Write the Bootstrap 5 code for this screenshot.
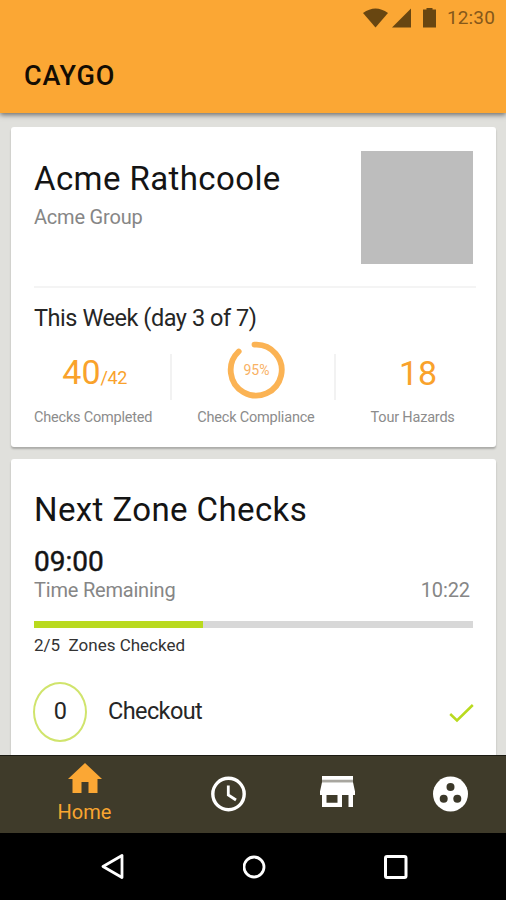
<!DOCTYPE html>
<html lang="en">
<head>
<meta charset="utf-8">
<meta name="viewport" content="width=device-width, initial-scale=1">
<title>CAYGO</title>
<link href="https://cdn.jsdelivr.net/npm/bootstrap@5.3.0/dist/css/bootstrap.min.css" rel="stylesheet">
<script src="https://cdn.jsdelivr.net/npm/bootstrap@5.3.0/dist/js/bootstrap.bundle.min.js" defer></script>
<style>
body{font-family:Roboto,"Liberation Sans",sans-serif;color:#262626;background:#e0e0dc}
svg{display:block;flex:none}
.app{height:900px;max-width:506px}
.topbar{height:113px;background:#fba734;box-shadow:0 2px 5px rgba(0,0,0,.5);z-index:2}
.status{height:35px;padding-right:11px;color:#684611}
.ico-batt{margin:0 11px 0 12px}
.clock{font-size:19px;line-height:20px;color:#85581a;letter-spacing:.15px}
.brand{font-size:27px;line-height:32px;font-weight:500;color:#140d03;padding:25px 0 0 24px;letter-spacing:.8px}
.feed{padding:14px 10px 0 11px;gap:12px}
.panel{border:0;border-radius:3px;box-shadow:0 2px 2px rgba(0,0,0,.24);flex:none;padding:0 23px;height:320px}
.ttl{font-size:33px;line-height:40px;color:#141414;white-space:nowrap;letter-spacing:.4px;margin-top:32px}
.panel-zone .ttl{margin-top:31px}
.sub{font-size:20px;line-height:24px;color:#868686;letter-spacing:-.2px}
.group{margin-top:6px}
.photo{width:112px;height:113px;background:#bdbdbd;margin-top:24px}
.rule{height:2px;background:#f4f4f4;margin:22px -3px 0 0}
.week{font-size:23.500px;line-height:28px;margin-top:16px;letter-spacing:-.45px}
.stats{margin-top:9px;height:88px}
.stat{color:#f9a22b}
.fig{height:62px;font-size:34px;line-height:40px}
.fig small{font-size:18px;letter-spacing:-.4px}
.fig-checks{padding:6px 0 0 3px}
.fig-hazards{padding:2px 0 0 11px}
.lbl{font-size:14.500px;line-height:18px;color:#8c8c8c;margin-top:6px;white-space:nowrap;letter-spacing:-.2px}
.sep{width:2px;height:46px;background:#f2f2f2;margin-top:13px}
.sep-a{margin-left:18px;margin-right:25px}
.sep-b{margin-left:19px;margin-right:35px}
.hour{font-size:28px;line-height:32px;-webkit-text-stroke:.45px #141414;color:#141414;margin-top:16px}
.left-time{margin-right:3px;letter-spacing:-.1px}
.bar{height:7px;border-radius:0;background:#d8d8d8;margin-top:19px}
.bar .progress-bar{background:#b9da1e}
.done{font-size:17px;line-height:20px;margin-top:7px;color:#333}
.count{width:54px;height:60px;border:2px solid #d0e46c;border-radius:50%;margin:0 21px 0 -1px}
.zone{margin-top:27px;font-size:23.500px;letter-spacing:-.6px}
.tick{margin-right:-1px;margin-top:1px}
.tabs{height:78px;background:#3f3b2a;border-top:1px solid #1b1a12;z-index:2;flex:none}
.tab-home{width:169px;padding-top:7px;gap:7px}
.tab-rest{padding:0 38px 2px 42px}
.sys{height:67px;background:#000;z-index:2;flex:none;padding:0 98px 0 101px}
.home{font-size:20px;line-height:24px;color:#f9a630}
</style>
</head>
<body>
<div class="app d-flex flex-column overflow-hidden">
  <header class="topbar position-relative flex-shrink-0">
    <div class="status d-flex justify-content-end align-items-center">
      <svg width="25" height="20" viewBox="0 0 25 20" fill="currentColor"><path d="M0 5Q12.500-4 25 5L12.500 19.500Z"/></svg>
      <svg class="ms-1" width="19" height="20" viewBox="0 0 19 20" fill="currentColor"><path d="M0 19.500H19V.5Z"/></svg>
      <svg class="ico-batt" width="13" height="20" viewBox="0 0 13 20" fill="currentColor"><path d="M0 1.500H3.500V0H9.500V1.500H13V19.500H0Z"/></svg>
      <span class="clock">12:30</span>
    </div>
    <div class="brand">CAYGO</div>
  </header>

  <main class="feed d-flex flex-column flex-grow-1 overflow-hidden">
    <section class="card panel">
      <div class="d-flex justify-content-between">
        <div>
          <div class="ttl">Acme Rathcoole</div>
          <div class="sub group">Acme Group</div>
        </div>
        <div class="photo"></div>
      </div>
      <div class="rule"></div>
      <div class="week">This Week (day 3 of 7)</div>
      <div class="stats d-flex">
        <div class="stat text-center">
          <div class="fig fig-checks d-flex justify-content-center align-items-center"><span>40<small>/42</small></span></div>
          <div class="lbl">Checks Completed</div>
        </div>
        <div class="sep sep-a"></div>
        <div class="stat text-center">
          <div class="fig d-flex justify-content-center">
            <svg width="58" height="58" viewBox="0 0 58 58"><path d="M27.500 3.600A25.500 25.500 0 1 1 11.700 10.500" fill="none" stroke="#fbb354" stroke-width="5.800" stroke-linecap="round"/><text x="29.500" y="33.500" text-anchor="middle" font-size="14" fill="#f9b163">95%</text></svg>
          </div>
          <div class="lbl">Check Compliance</div>
        </div>
        <div class="sep sep-b"></div>
        <div class="stat text-center">
          <div class="fig fig-hazards d-flex justify-content-center align-items-center">18</div>
          <div class="lbl">Tour Hazards</div>
        </div>
      </div>
    </section>

    <section class="card panel panel-zone">
      <div class="ttl">Next Zone Checks</div>
      <div class="hour">09:00</div>
      <div class="d-flex justify-content-between sub">
        <span>Time Remaining</span><span class="left-time">10:22</span>
      </div>
      <div class="progress bar"><div class="progress-bar" style="width:38.5%"></div></div>
      <div class="done">2/5&nbsp; Zones Checked</div>
      <div class="zone d-flex align-items-center">
        <div class="count d-flex justify-content-center align-items-center">0</div>
        <span>Checkout</span>
        <svg class="tick ms-auto" width="25" height="20" viewBox="0 0 25 20"><path d="M1.200 11L8 17.500L23.800 2" fill="none" stroke="#b9da1e" stroke-width="2.500"/></svg>
      </div>
    </section>
  </main>

  <nav class="tabs d-flex position-relative">
    <div class="tab-home d-flex flex-column align-items-center">
      <svg width="34" height="30" viewBox="0 0 34 30" fill="#fba734"><path d="M17 0L34 16H29.500V30H20.500V19H13.500V30H4.500V16H0Z"/></svg>
      <span class="home">Home</span>
    </div>
    <div class="tab-rest d-flex flex-grow-1 align-items-center justify-content-between">
      <svg width="35" height="36" viewBox="0 0 35 36" fill="none" stroke="#fff"><circle cx="17.500" cy="18" r="15.700" stroke-width="3.400"/><path d="M17.300 9.500V19L25 24" stroke-width="2.800"/></svg>
      <svg class="me-1 mb-1" width="35" height="31" viewBox="0 0 35 32" preserveAspectRatio="none" fill="#fff"><path d="M2 0H33V4H2Z"/><path d="M2 6.500H33L35 16V19.500H33V32H28.500V19.500H22V32H2V19.500H0V16ZM6.500 19.500V27.500H17.500V19.500Z" fill-rule="evenodd"/><path d="M2 4H33V6.500H2Z" opacity=".55"/></svg>
      <svg width="35" height="36" viewBox="0 0 35 36"><circle cx="17.500" cy="18" r="17.500" fill="#fff"/><g fill="#3b3829"><circle cx="17.500" cy="11" r="4"/><circle cx="10.700" cy="22.700" r="4"/><circle cx="24.300" cy="22.700" r="4"/></g></svg>
    </div>
  </nav>
  <footer class="sys d-flex align-items-center justify-content-between position-relative">
    <svg width="24" height="26" viewBox="0 0 24 26" fill="none" stroke="#fff" stroke-width="2.800" stroke-linejoin="round"><path d="M2 12.500L21 1.500V23.500Z"/></svg>
    <svg width="24" height="24" viewBox="0 0 24 24" fill="none" stroke="#fff" stroke-width="2.800"><circle cx="11" cy="12" r="10"/></svg>
    <svg width="24" height="24" viewBox="0 0 24 24" fill="none" stroke="#fff" stroke-width="3"><rect x="1.500" y="1.500" width="20.500" height="21" rx="1.500"/></svg>
  </footer>
</div>
</body>
</html>
